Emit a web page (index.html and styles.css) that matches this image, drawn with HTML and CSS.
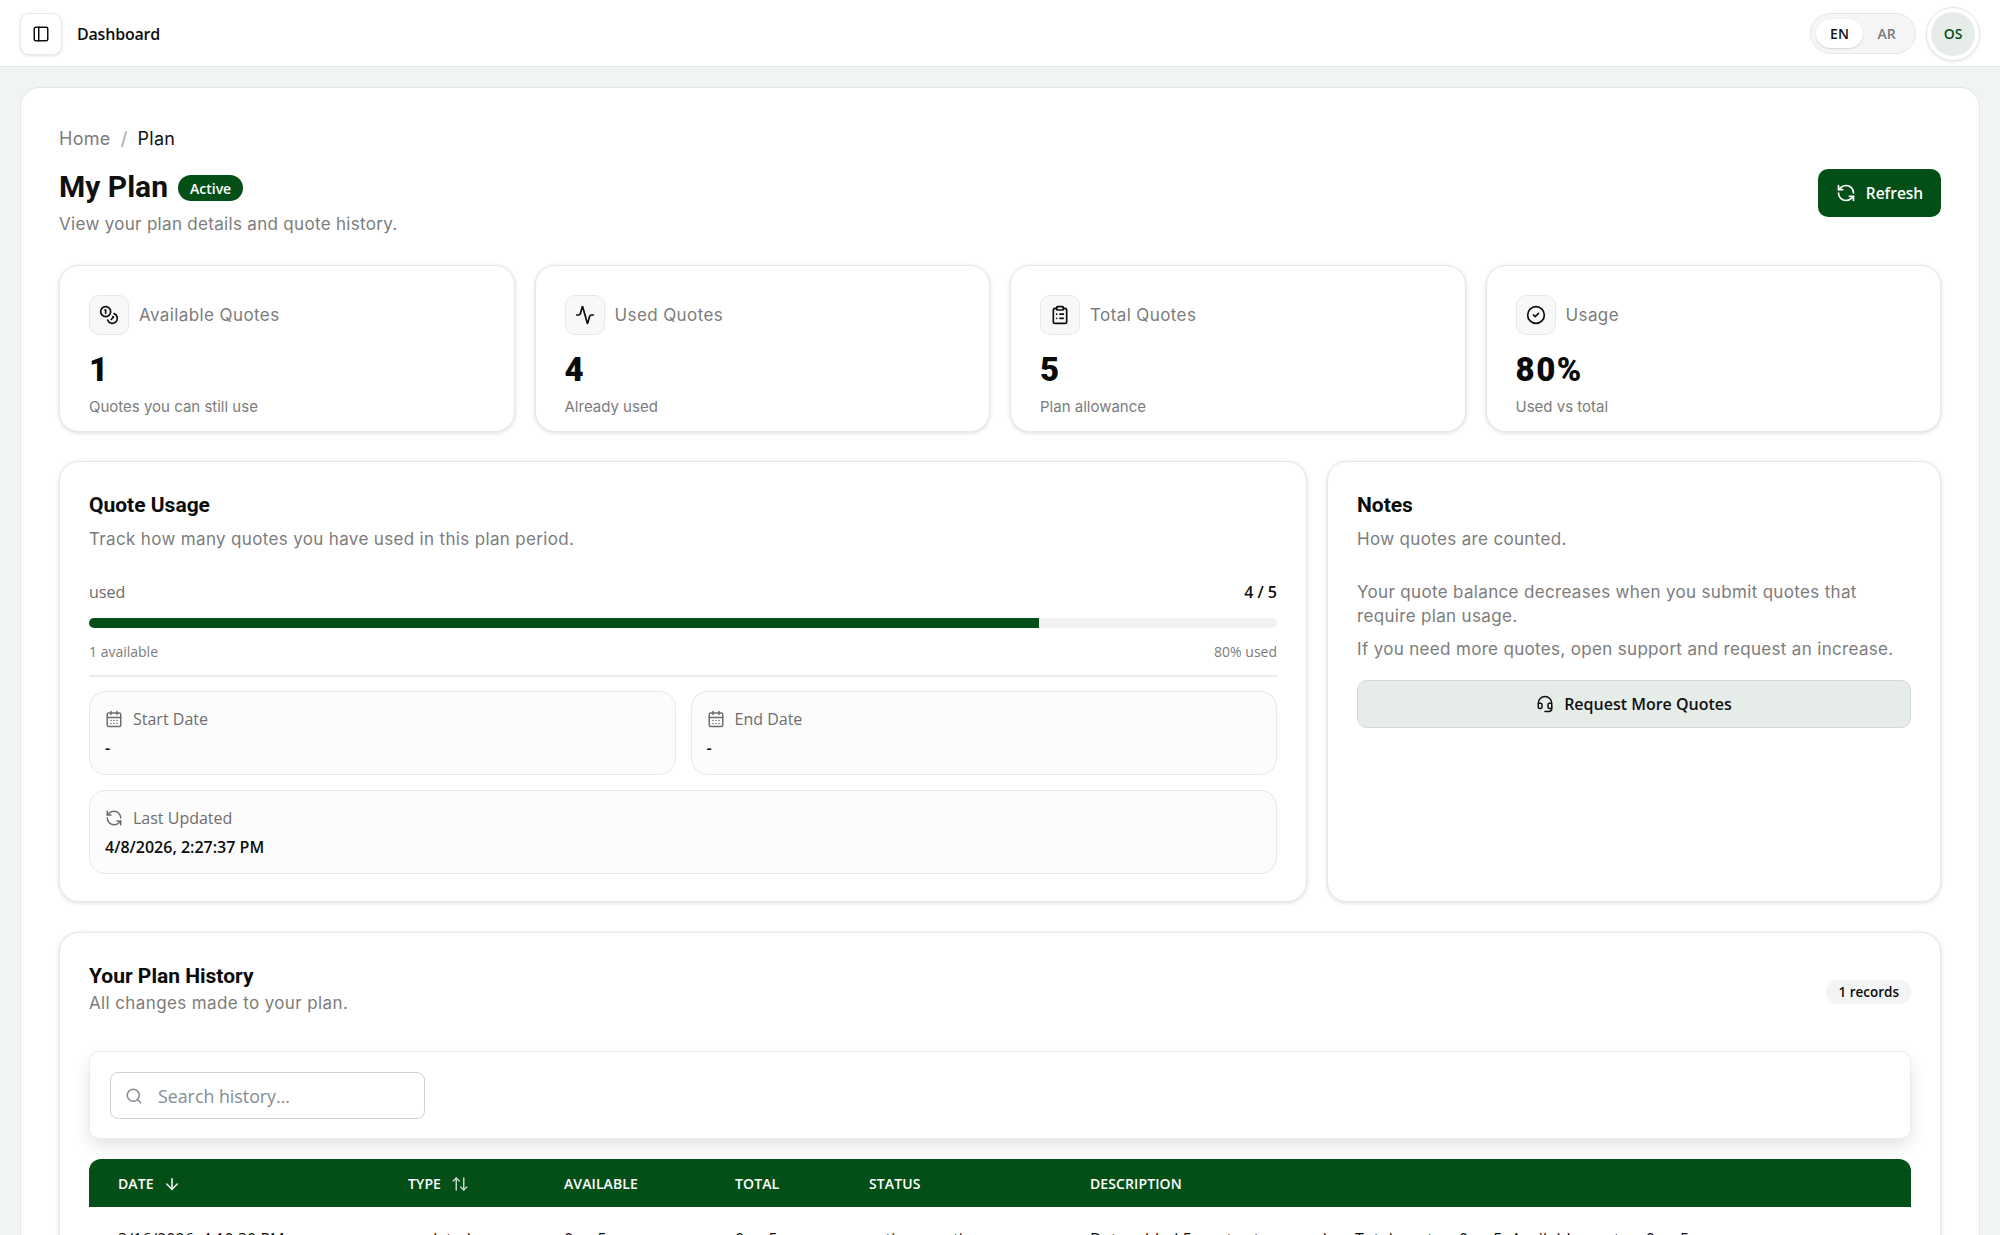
FILE: index.html
```html
<!DOCTYPE html>
<html lang="en">
<head>
    <meta charset="UTF-8">
    <meta name="viewport" content="width=device-width, initial-scale=1.0">
    <title>My Plan</title>
    <link rel="stylesheet" href="styles.css">
</head>
<body>
    <!-- Icon sprite -->
    <svg class="sprite" xmlns="http://www.w3.org/2000/svg">
        <symbol id="i-panel" viewBox="0 0 24 24"><rect x="3" y="3" width="18" height="18" rx="2"/><path d="M9 3v18"/></symbol>
        <symbol id="i-refresh" viewBox="0 0 24 24"><path d="M21 12a9 9 0 0 0-9-9 9.75 9.75 0 0 0-6.74 2.74L3 8"/><path d="M3 3v5h5"/><path d="M3 12a9 9 0 0 0 9 9 9.75 9.75 0 0 0 6.74-2.74L21 16"/><path d="M16 16h5v5"/></symbol>
        <symbol id="i-coins" viewBox="0 0 24 24"><circle cx="8" cy="8" r="6"/><path d="M18.09 10.37A6 6 0 1 1 10.34 18"/><path d="M7 6h1v4"/><path d="m16.71 13.88.7.71-2.82 2.82"/></symbol>
        <symbol id="i-activity" viewBox="0 0 24 24"><path d="M22 12h-2.48a2 2 0 0 0-1.93 1.46l-2.35 8.36a.25.25 0 0 1-.48 0L9.24 2.18a.25.25 0 0 0-.48 0l-2.35 8.36A2 2 0 0 1 4.49 12H2"/></symbol>
        <symbol id="i-clipboard" viewBox="0 0 24 24"><rect x="8" y="2" width="8" height="4" rx="1"/><path d="M16 4h2a2 2 0 0 1 2 2v14a2 2 0 0 1-2 2H6a2 2 0 0 1-2-2V6a2 2 0 0 1 2-2h2"/><path d="M12 11h4"/><path d="M12 16h4"/><path d="M8 11h.01"/><path d="M8 16h.01"/></symbol>
        <symbol id="i-check" viewBox="0 0 24 24"><circle cx="12" cy="12" r="10"/><path d="m9 12 2 2 4-4"/></symbol>
        <symbol id="i-calendar" viewBox="0 0 24 24"><path d="M8 2v4"/><path d="M16 2v4"/><rect x="3" y="4" width="18" height="18" rx="2"/><path d="M3 10h18"/><path d="M8 14h.01"/><path d="M12 14h.01"/><path d="M16 14h.01"/><path d="M8 18h.01"/><path d="M12 18h.01"/><path d="M16 18h.01"/></symbol>
        <symbol id="i-headset" viewBox="0 0 24 24"><path d="M3 11h3a2 2 0 0 1 2 2v3a2 2 0 0 1-2 2H5a2 2 0 0 1-2-2v-5Zm0 0a9 9 0 1 1 18 0m0 0v5a2 2 0 0 1-2 2h-1a2 2 0 0 1-2-2v-3a2 2 0 0 1 2-2h3Z"/><path d="M21 16v2a4 4 0 0 1-4 4h-5"/></symbol>
        <symbol id="i-search" viewBox="0 0 24 24"><circle cx="11" cy="11" r="8"/><path d="m21 21-4.3-4.3"/></symbol>
        <symbol id="i-down" viewBox="0 0 24 24"><path d="M12 5v14"/><path d="m19 12-7 7-7-7"/></symbol>
        <symbol id="i-updown" viewBox="0 0 24 24"><path d="m21 16-4 4-4-4"/><path d="M17 20V4"/><path d="m3 8 4-4 4 4"/><path d="M7 4v16"/></symbol>
    </svg>

    <header class="topbar">
        <div class="topbar-left">
            <button class="sidebar-toggle"><svg class="icon icon-18"><use href="#i-panel"/></svg></button>
            <span class="topbar-title">Dashboard</span>
        </div>
        <div class="topbar-right">
            <div class="lang-switch">
                <span class="lang lang-active">EN</span>
                <span class="lang">AR</span>
            </div>
            <div class="avatar"><span class="avatar-inner">OS</span></div>
        </div>
    </header>

    <main class="page">
        <div class="panel">
            <div class="breadcrumb">
                <span>Home</span>
                <span class="crumb-sep">/</span>
                <span class="crumb-current">Plan</span>
            </div>

            <div class="page-head">
                <div>
                    <div class="title-row">
                        <h1>My Plan</h1>
                        <span class="badge-active">Active</span>
                    </div>
                    <p class="page-sub">View your plan details and quote history.</p>
                </div>
                <button class="btn-refresh"><svg class="icon icon-20"><use href="#i-refresh"/></svg>Refresh</button>
            </div>

            <section class="stats">
                <div class="card stat">
                    <div class="stat-head">
                        <span class="stat-icon"><svg class="icon icon-20"><use href="#i-coins"/></svg></span>
                        <span class="stat-label">Available Quotes</span>
                    </div>
                    <div class="stat-value">1</div>
                    <div class="stat-sub">Quotes you can still use</div>
                </div>
                <div class="card stat">
                    <div class="stat-head">
                        <span class="stat-icon"><svg class="icon icon-20"><use href="#i-activity"/></svg></span>
                        <span class="stat-label">Used Quotes</span>
                    </div>
                    <div class="stat-value">4</div>
                    <div class="stat-sub">Already used</div>
                </div>
                <div class="card stat">
                    <div class="stat-head">
                        <span class="stat-icon"><svg class="icon icon-20"><use href="#i-clipboard"/></svg></span>
                        <span class="stat-label">Total Quotes</span>
                    </div>
                    <div class="stat-value">5</div>
                    <div class="stat-sub">Plan allowance</div>
                </div>
                <div class="card stat">
                    <div class="stat-head">
                        <span class="stat-icon"><svg class="icon icon-20"><use href="#i-check"/></svg></span>
                        <span class="stat-label">Usage</span>
                    </div>
                    <div class="stat-value">80%</div>
                    <div class="stat-sub">Used vs total</div>
                </div>
            </section>

            <section class="columns">
                <div class="card usage">
                    <h2>Quote Usage</h2>
                    <p class="card-sub">Track how many quotes you have used in this plan period.</p>

                    <div class="usage-row">
                        <span class="usage-label">used</span>
                        <span class="usage-count">4 / 5</span>
                    </div>
                    <div class="progress"><div class="progress-fill" style="width: 80%"></div></div>
                    <div class="usage-foot">
                        <span>1 available</span>
                        <span>80% used</span>
                    </div>

                    <div class="dates">
                        <div class="date-box">
                            <div class="date-label"><svg class="icon icon-18"><use href="#i-calendar"/></svg>Start Date</div>
                            <div class="date-value">-</div>
                        </div>
                        <div class="date-box">
                            <div class="date-label"><svg class="icon icon-18"><use href="#i-calendar"/></svg>End Date</div>
                            <div class="date-value">-</div>
                        </div>
                        <div class="date-box date-wide">
                            <div class="date-label"><svg class="icon icon-18"><use href="#i-refresh"/></svg>Last Updated</div>
                            <div class="date-value">4/8/2026, 2:27:37 PM</div>
                        </div>
                    </div>
                </div>

                <div class="card notes">
                    <h2>Notes</h2>
                    <p class="card-sub">How quotes are counted.</p>
                    <p class="notes-text notes-first">Your quote balance decreases when you submit quotes that require plan usage.</p>
                    <p class="notes-text">If you need more quotes, open support and request an increase.</p>
                    <button class="btn-request"><svg class="icon icon-18"><use href="#i-headset"/></svg>Request More Quotes</button>
                </div>
            </section>

            <section class="card history">
                <div class="history-head">
                    <div>
                        <h2>Your Plan History</h2>
                        <p class="history-sub">All changes made to your plan.</p>
                    </div>
                    <span class="records">1 records</span>
                </div>

                <div class="search-card">
                    <div class="search-box">
                        <svg class="icon icon-18"><use href="#i-search"/></svg>
                        <span>Search history...</span>
                    </div>
                </div>

                <table class="history-table">
                    <thead>
                        <tr>
                            <th class="col-date">Date <svg class="icon icon-18"><use href="#i-down"/></svg></th>
                            <th class="col-type">Type <svg class="icon icon-18 sort-idle"><use href="#i-updown"/></svg></th>
                            <th class="col-avail">Available</th>
                            <th class="col-total">Total</th>
                            <th class="col-status">Status</th>
                            <th>Description</th>
                        </tr>
                    </thead>
                    <tbody>
                        <tr>
                            <td>3/16/2026, 4:10:30 PM</td>
                            <td>updated</td>
                            <td>0 → 5</td>
                            <td>0 → 5</td>
                            <td>active → active</td>
                            <td class="cell-desc">Data added 5 quotes to your plan. Total quotes: 0 → 5. Available quotes: 0 → 5</td>
                        </tr>
                    </tbody>
                </table>
            </section>
        </div>
    </main>
</body>
</html>
```

FILE: styles.css
```css
* {
    box-sizing: border-box;
}
html, body {
    height: 100%;
}
body {
    margin: 0;
    overflow: hidden;
    background-color: #f1f5f2;
    color: #0c0c0c;
    font-family: 'Open Sans', 'Noto Sans', sans-serif;
    font-size: 15px;
}
.sprite {
    display: none;
}
.icon {
    fill: none;
    stroke: currentColor;
    stroke-width: 2;
    stroke-linecap: round;
    stroke-linejoin: round;
    flex-shrink: 0;
}
.icon-18 { width: 18px; height: 18px; }
.icon-20 { width: 20px; height: 20px; }

/* Top bar */
.topbar {
    height: 67px;
    display: flex;
    align-items: center;
    justify-content: space-between;
    padding: 1px 20px 0;
    background-color: #fff;
    border-bottom: 1px solid #e6e8e6;
}
.topbar-left {
    display: flex;
    align-items: center;
    gap: 15px;
}
.sidebar-toggle {
    width: 42px;
    height: 42px;
    display: flex;
    align-items: center;
    justify-content: center;
    padding: 0;
    background-color: #fff;
    color: #111;
    border: 1px solid #eaeaea;
    border-radius: 9px;
    box-shadow: 0 1px 3px rgba(0, 0, 0, 0.12);
}
.topbar-title {
    font-size: 16px;
    font-weight: 600;
    letter-spacing: -0.2px;
}
.topbar-right {
    display: flex;
    align-items: center;
    gap: 10px;
}
.lang-switch {
    display: flex;
    align-items: center;
    height: 41px;
    padding: 5px;
    background-color: #f6f6f6;
    border: 1px solid #e6e6e6;
    border-radius: 21px;
}
.lang {
    width: 47px;
    height: 29px;
    display: flex;
    align-items: center;
    justify-content: center;
    color: #7a7a7a;
    font-size: 14px;
    font-weight: 600;
    border-radius: 15px;
}
.lang-active {
    background-color: #fff;
    color: #111;
    box-shadow: 0 1px 2px rgba(0, 0, 0, 0.15);
}
.avatar {
    width: 54px;
    height: 54px;
    padding: 4px;
    background-color: #fff;
    border: 1px solid #e6e6e6;
    border-radius: 50%;
    box-shadow: 0 1px 3px rgba(0, 0, 0, 0.1);
}
.avatar-inner {
    width: 100%;
    height: 100%;
    display: flex;
    align-items: center;
    justify-content: center;
    background-color: #e6ece8;
    color: #044f18;
    font-size: 14px;
    font-weight: 600;
    border-radius: 50%;
}

/* Page panel */
.page {
    padding: 20px 20px 0;
}
.panel {
    padding: 38px 38px 40px;
    background-color: #fff;
    border: 1px solid #e3e6e3;
    border-radius: 20px;
}
.breadcrumb {
    display: flex;
    align-items: center;
    gap: 10px;
    height: 24px;
    font-family: Inter, sans-serif;
    font-size: 18px;
    letter-spacing: 0.3px;
    color: #7c7c7c;
}
.crumb-sep {
    color: #a5a5a5;
}
.crumb-current {
    color: #111;
}
.page-head {
    display: flex;
    align-items: flex-end;
    justify-content: space-between;
    margin-top: 16px;
}
.title-row {
    display: flex;
    align-items: center;
    gap: 10px;
    height: 41px;
}
h1 {
    margin: 0;
    font-family: Roboto, sans-serif;
    font-size: 30px;
    font-weight: 700;
    color: #101010;
}
.badge-active {
    height: 26px;
    padding: 0 12px;
    display: flex;
    align-items: center;
    margin-top: 3px;
    background-color: #044f18;
    color: #fff;
    font-size: 14px;
    font-weight: 600;
    border-radius: 13px;
}
.page-sub {
    margin: 5px 0 0;
    font-family: Inter, sans-serif;
    font-size: 17px;
    line-height: 24px;
    letter-spacing: 0.31px;
    color: #7c7c7c;
}
.btn-refresh {
    width: 123px;
    height: 48px;
    margin-bottom: 19px;
    display: flex;
    align-items: center;
    justify-content: center;
    gap: 10px;
    background-color: #044f18;
    color: #fff;
    border: none;
    border-radius: 10px;
    font-family: inherit;
    font-size: 15.5px;
    font-weight: 600;
}

/* Cards */
.card {
    background-color: #fff;
    border: 1px solid #e8e8e8;
    border-radius: 20px;
    box-shadow: 0 1px 4px rgba(0, 0, 0, 0.14);
}
.stats {
    display: grid;
    grid-template-columns: repeat(4, 1fr);
    gap: 20px;
    margin-top: 29px;
}
.stat {
    height: 167px;
    padding: 29px 29px 0;
}
.stat-head {
    display: flex;
    align-items: center;
    gap: 10px;
}
.stat-icon {
    width: 40px;
    height: 40px;
    display: flex;
    align-items: center;
    justify-content: center;
    background-color: #f8f8f8;
    border: 1px solid #e8e8e8;
    border-radius: 10px;
}
.stat-label {
    font-family: Inter, sans-serif;
    font-size: 17px;
    letter-spacing: 0.4px;
    color: #7c7c7c;
}
.stat-value {
    margin-top: 15px;
    font-family: Roboto, sans-serif;
    font-size: 33px;
    line-height: 40px;
    font-weight: 900;
    letter-spacing: 1.5px;
    color: #0a0a0a;
}
.stat-sub {
    margin-top: 7px;
    font-family: Inter, sans-serif;
    font-size: 15px;
    line-height: 20px;
    color: #7c7c7c;
}
.columns {
    display: grid;
    grid-template-columns: 1248px 1fr;
    gap: 20px;
    margin-top: 29px;
}
.usage, .notes {
    height: 441px;
    padding: 29px;
}
h2 {
    margin: 0;
    font-family: Roboto, sans-serif;
    font-size: 21px;
    line-height: 28px;
    font-weight: 700;
    color: #0a0a0a;
}
.card-sub {
    margin: 8px 0 0;
    font-family: Inter, sans-serif;
    font-size: 17px;
    line-height: 24px;
    letter-spacing: 0.34px;
    color: #7c7c7c;
}
.usage-row {
    display: flex;
    align-items: center;
    justify-content: space-between;
    margin-top: 29px;
    height: 24px;
}
.usage-label {
    font-size: 16px;
    color: #6c6c6c;
}
.usage-count {
    font-size: 16px;
    font-weight: 600;
}
.progress {
    height: 10px;
    margin-top: 14px;
    background-color: #f1f3f2;
    border-radius: 5px;
    overflow: hidden;
}
.progress-fill {
    height: 100%;
    background-color: #044f18;
}
.usage-foot {
    display: flex;
    justify-content: space-between;
    margin-top: 14px;
    padding-bottom: 13px;
    font-size: 14px;
    line-height: 20px;
    color: #7c7c7c;
    border-bottom: 2px solid #ececec;
}
.dates {
    display: grid;
    grid-template-columns: 1fr 1fr;
    gap: 15px;
    margin-top: 14px;
}
.date-box {
    height: 84px;
    padding: 15px;
    background-color: #fcfcfc;
    border: 1px solid #e8e8e8;
    border-radius: 16px;
}
.date-wide {
    grid-column: span 2;
}
.date-label {
    display: flex;
    align-items: center;
    gap: 10px;
    height: 24px;
    font-size: 16px;
    color: #6e6e6e;
}
.date-value {
    margin-top: 5px;
    font-size: 16px;
    line-height: 24px;
    font-weight: 600;
}
.notes-text {
    margin: 0;
    font-family: Inter, sans-serif;
    font-size: 17px;
    line-height: 24px;
    letter-spacing: 0.33px;
    color: #7c7c7c;
}
.notes-first {
    margin: 29px 0 9px;
}
.btn-request {
    width: 100%;
    height: 48px;
    margin-top: 19px;
    display: flex;
    align-items: center;
    justify-content: center;
    gap: 10px;
    background-color: #e6ece8;
    color: #111;
    border: 1px solid #d2d9d4;
    border-radius: 10px;
    font-family: inherit;
    font-size: 16px;
    font-weight: 600;
}

/* History */
.history {
    margin-top: 30px;
    padding: 29px;
}
.history-head {
    display: flex;
    align-items: center;
    justify-content: space-between;
}
.history-sub {
    margin: 1px 0 0;
    font-family: Inter, sans-serif;
    font-size: 17px;
    line-height: 24px;
    letter-spacing: 0.38px;
    color: #7c7c7c;
}
.records {
    margin-top: 6px;
    padding: 3px 12px;
    background-color: #f3f5f4;
    font-size: 13.5px;
    font-weight: 600;
    border-radius: 13px;
}
.search-card {
    margin-top: 36px;
    padding: 20px 20px 19px;
    background-color: #fff;
    border: 1px solid #eaeaea;
    border-radius: 10px;
    box-shadow: 0 8px 16px rgba(0, 0, 0, 0.1);
}
.search-box {
    width: 315px;
    height: 47px;
    display: flex;
    align-items: center;
    gap: 15px;
    padding: 0 14px;
    color: #858c92;
    font-size: 17.8px;
    border: 1px solid #ced2d6;
    border-radius: 8px;
}
.history-table {
    width: 100%;
    margin-top: 20px;
    border-collapse: separate;
    border-spacing: 0;
    table-layout: fixed;
}
.history-table th {
    height: 48px;
    padding: 0 0 0 29px;
    background-color: #044f18;
    color: #fff;
    font-size: 14px;
    font-weight: 600;
    letter-spacing: 0.1px;
    text-align: left;
    text-transform: uppercase;
}
.history-table th:first-child {
    border-top-left-radius: 12px;
}
.history-table th:last-child {
    border-top-right-radius: 12px;
}
.history-table th .icon {
    margin-left: 6px;
    vertical-align: -4px;
}
.sort-idle {
    opacity: 0.75;
}
.history-table td {
    padding: 21px 0 20px 29px;
    font-size: 16px;
    color: #111;
    white-space: nowrap;
}
.cell-desc {
    letter-spacing: 0.2px;
}
.col-date { width: 290px; }
.col-type { width: 156px; }
.col-avail { width: 171px; }
.col-total { width: 134px; }
.col-status { width: 221px; }
```
